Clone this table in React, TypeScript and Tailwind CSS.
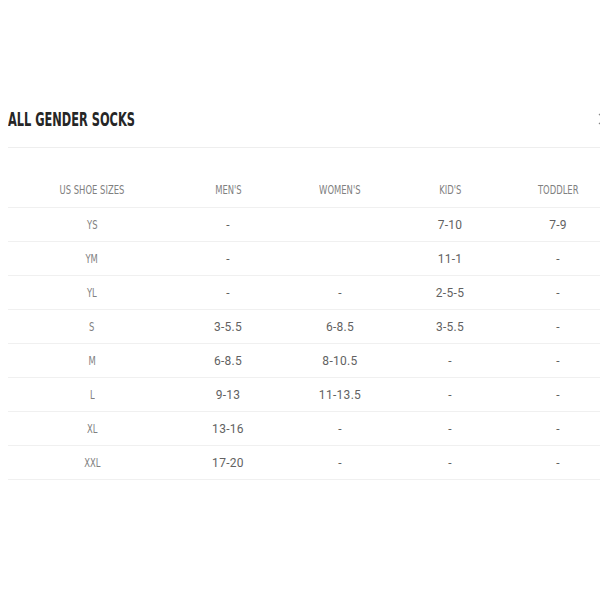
import React from "react";

const rows: string[][] = [
  ["YS", "-", "", "7-10", "7-9"],
  ["YM", "-", "", "11-1", "-"],
  ["YL", "-", "-", "2-5-5", "-"],
  ["S", "3-5.5", "6-8.5", "3-5.5", "-"],
  ["M", "6-8.5", "8-10.5", "-", "-"],
  ["L", "9-13", "11-13.5", "-", "-"],
  ["XL", "13-16", "-", "-", "-"],
  ["XXL", "17-20", "-", "-", "-"],
];

const headers = ["US SHOE SIZES", "MEN'S", "WOMEN'S", "KID'S", "TODDLER"];
const cols = "grid grid-cols-[168px_104px_120px_100px_116px]";
const cond = { fontFamily: '"DejaVu Sans Condensed", "DejaVu Sans", sans-serif', fontStretch: "condensed" as const };

export default function App() {
  return (
    <div className="w-[600px] h-[600px] overflow-hidden bg-white relative">
      <div className="w-[620px] pl-2 pt-[107px]">
        <div className="h-[41px] border-b border-[#eeeeee] flex items-start">
          <h2
            className="text-[19px] leading-[24px] text-[#262626] scale-x-[0.665] origin-left font-bold whitespace-nowrap"
            style={cond}
          >
            ALL GENDER SOCKS
          </h2>
        </div>
        <div>
          <div className={`${cols} h-[60px] pb-[10px] border-b border-[#f0f0f0] items-end`}>
            {headers.map((h) => (
              <div
                key={h}
                className="text-center text-[13px] leading-[14px] text-[#808080] whitespace-nowrap"
                style={cond}
              >
                <span className="inline-block scale-x-[0.72]">{h}</span>
              </div>
            ))}
          </div>
          {rows.map((r, i) => (
            <div key={i} className={`${cols} h-[34px] border-b border-[#f0f0f0] items-center`}>
              {r.map((c, j) =>
                j === 0 ? (
                  <div key={j} className="text-center text-[13px] text-[#808080]" style={cond}>
                    <span className="inline-block scale-x-[0.72]">{c}</span>
                  </div>
                ) : (
                  <div
                    key={j}
                    className="text-center text-[12px] text-[#626262] font-['Roboto',sans-serif] tracking-[0.3px]"
                  >
                    {c}
                  </div>
                )
              )}
            </div>
          ))}
        </div>
      </div>
      <svg className="absolute left-[598px] top-[113px]" width="12" height="12" viewBox="0 0 12 12">
        <path d="M1 1L11 11M11 1L1 11" stroke="#888" strokeWidth="1.2" />
      </svg>
    </div>
  );
}
